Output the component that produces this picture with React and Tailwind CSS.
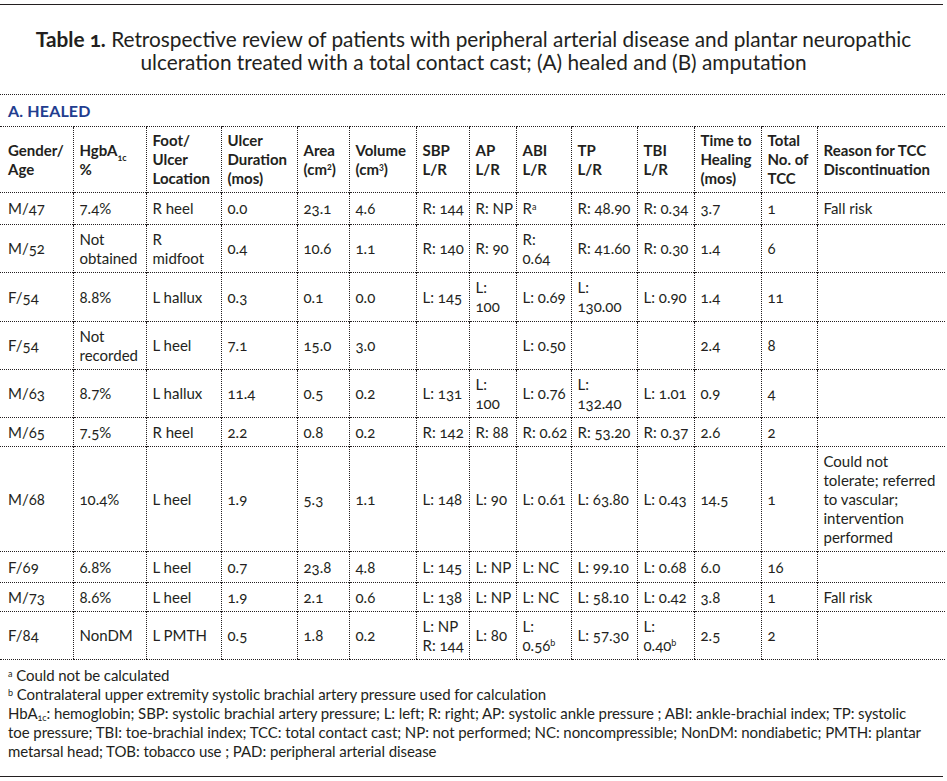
const ink = "text-[#231f20]";

const head = [
  ["Gender/", "Age"],
  [<>HgbA<sub className="text-[9px] align-[-3px]">1c</sub></>, "%"],
  ["Foot/", "Ulcer", "Location"],
  ["Ulcer", "Duration", "(mos)"],
  ["Area", <>(cm<sup className="text-[9px]">2</sup>)</>],
  ["Volume", <>(cm<sup className="text-[9px]">3</sup>)</>],
  ["SBP", "L/R"],
  ["AP", "L/R"],
  ["ABI", "L/R"],
  ["TP", "L/R"],
  ["TBI", "L/R"],
  ["Time to", "Healing", "(mos)"],
  ["Total", "No. of", "TCC"],
  ["Reason for TCC", "Discontinuation"],
];

const widths = [73, 73, 75, 76, 52, 67, 53, 47, 55, 66, 57, 67, 56, 128];

const a = <sup className="text-[9px]">a</sup>;
const b = <sup className="text-[9px]">b</sup>;

// each cell is a list of lines, row heights taken from the print
const rows = [
  { h: "h-[32px]", c: [["M/47"], ["7.4%"], ["R heel"], ["0.0"], ["23.1"], ["4.6"], ["R: 144"], ["R: NP"], [<>R{a}</>], ["R: 48.90"], ["R: 0.34"], ["3.7"], ["1"], ["Fall risk"]] },
  { h: "h-[48px]", c: [["M/52"], ["Not", "obtained"], ["R", "midfoot"], ["0.4"], ["10.6"], ["1.1"], ["R: 140"], ["R: 90"], ["R:", "0.64"], ["R: 41.60"], ["R: 0.30"], ["1.4"], ["6"], []] },
  { h: "h-[49px]", c: [["F/54"], ["8.8%"], ["L hallux"], ["0.3"], ["0.1"], ["0.0"], ["L: 145"], ["L:", "100"], ["L: 0.69"], ["L:", "130.00"], ["L: 0.90"], ["1.4"], ["11"], []] },
  { h: "h-[48px]", c: [["F/54"], ["Not", "recorded"], ["L heel"], ["7.1"], ["15.0"], ["3.0"], [], [], ["L: 0.50"], [], [], ["2.4"], ["8"], []] },
  { h: "h-[48px]", c: [["M/63"], ["8.7%"], ["L hallux"], ["11.4"], ["0.5"], ["0.2"], ["L: 131"], ["L:", "100"], ["L: 0.76"], ["L:", "132.40"], ["L: 1.01"], ["0.9"], ["4"], []] },
  { h: "h-[29px]", c: [["M/65"], ["7.5%"], ["R heel"], ["2.2"], ["0.8"], ["0.2"], ["R: 142"], ["R: 88"], ["R: 0.62"], ["R: 53.20"], ["R: 0.37"], ["2.6"], ["2"], []] },
  { h: "h-[105px]", c: [["M/68"], ["10.4%"], ["L heel"], ["1.9"], ["5.3"], ["1.1"], ["L: 148"], ["L: 90"], ["L: 0.61"], ["L: 63.80"], ["L: 0.43"], ["14.5"], ["1"], ["Could not", "tolerate; referred", "to vascular;", "intervention", "performed"]] },
  { h: "h-[31px]", c: [["F/69"], ["6.8%"], ["L heel"], ["0.7"], ["23.8"], ["4.8"], ["L: 145"], ["L: NP"], ["L: NC"], ["L: 99.10"], ["L: 0.68"], ["6.0"], ["16"], []] },
  { h: "h-[29px]", c: [["M/73"], ["8.6%"], ["L heel"], ["1.9"], ["2.1"], ["0.6"], ["L: 138"], ["L: NP"], ["L: NC"], ["L: 58.10"], ["L: 0.42"], ["3.8"], ["1"], ["Fall risk"]] },
  { h: "h-[48px]", c: [["F/84"], ["NonDM"], ["L PMTH"], ["0.5"], ["1.8"], ["0.2"], ["L: NP", "R: 144"], ["L: 80"], ["L:", <>0.56{b}</>], ["L: 57.30"], ["L:", <>0.40{b}</>], ["2.5"], ["2"], []] },
];

function Cell({ lines, i, bold, last }) {
  return (
    <td
      className={`align-middle whitespace-nowrap pr-1 border-t border-dotted border-[#231f20] ${
        i === 0 ? "pl-2" : "pl-[6px] border-l"
      } ${bold ? "font-bold" : ""} ${last ? "border-b" : ""}`}
    >
      {lines.map((l, k) => (
        <div key={k}>{l}</div>
      ))}
    </td>
  );
}

export default function App() {
  return (
    <div className={`w-[947px] bg-white ${ink} font-['Lato',sans-serif] oldstyle-nums`}>
      <div className="w-[943px] border-t-[1.5px] border-[#231f20] mt-1" />

      <h1 className="mt-[22px] text-center text-[20.8px] leading-[23px] font-normal">
        <b>Table 1.</b> Retrospective review of patients with peripheral arterial disease and plantar neuropathic
        <br />
        ulceration treated with a total contact cast; (A) healed and (B) amputation
      </h1>

      <div className="mt-[21px] w-[945px] border-t border-dotted border-[#231f20] pl-2 h-8 flex items-center text-[16px] font-bold text-[#223d8f] tracking-[0.01em]">
        A. HEALED
      </div>

      <table className="w-[945px] table-fixed border-collapse text-[15px] leading-[19px]">
        <colgroup>
          {widths.map((w, i) => (
            <col key={i} style={{ width: w }} />
          ))}
        </colgroup>
        <thead>
          <tr className="h-[66px]">
            {head.map((lines, i) => (
              <Cell key={i} lines={lines} i={i} bold />
            ))}
          </tr>
        </thead>
        <tbody>
          {rows.map((r, ri) => (
            <tr key={ri} className={r.h}>
              {r.c.map((lines, i) => (
                <Cell key={i} lines={lines} i={i} last={ri === rows.length - 1} />
              ))}
            </tr>
          ))}
        </tbody>
      </table>

      <div className="pl-2 pt-[6px] text-[15px] leading-[19px] tracking-[-0.005em]">
        <p><sup className="text-[9px]">a</sup> Could not be calculated</p>
        <p><sup className="text-[9px]">b</sup> Contralateral upper extremity systolic brachial artery pressure used for calculation</p>
        <p>
          HbA<sub className="text-[9px]">1c</sub>: hemoglobin; SBP: systolic brachial artery pressure; L: left; R: right; AP: systolic ankle pressure ; ABI: ankle-brachial index; TP: systolic
          <br />
          toe pressure; TBI: toe-brachial index; TCC: total contact cast; NP: not performed; NC: noncompressible; NonDM: nondiabetic; PMTH: plantar
          <br />
          metarsal head; TOB: tobacco use ; PAD: peripheral arterial disease
        </p>
      </div>

      <div className="mt-[15px] w-[943px] border-t-[1.5px] border-[#231f20]" />
    </div>
  );
}
